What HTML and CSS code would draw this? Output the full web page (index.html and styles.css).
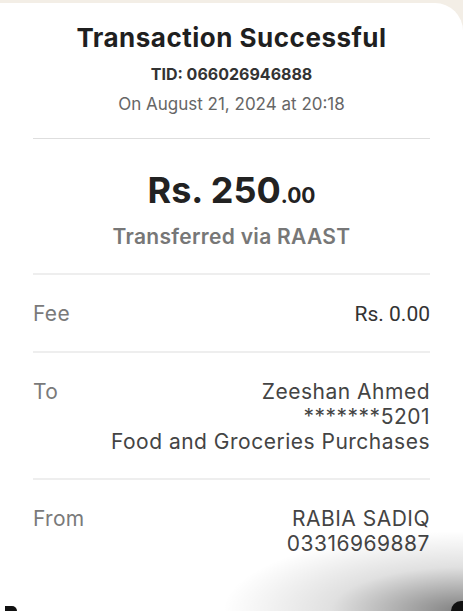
FILE: index.html
```html
<!DOCTYPE html>
<html lang="en">
<head>
<meta charset="utf-8">
<title>Transaction Successful</title>
<link rel="stylesheet" href="styles.css">
</head>
<body>
<div class="screen">
  <div class="card">
    <header class="head">
      <h1 class="title">Transaction Successful</h1>
      <p class="tid">TID: 066026946888</p>
      <p class="date">On August 21, 2024 at 20:18</p>
    </header>
    <section class="amount-block">
      <p class="amount">Rs. 250<span class="cents">.00</span></p>
      <p class="via">Transferred via RAAST</p>
    </section>
    <div class="row">
      <span class="label">Fee</span>
      <span class="value fee">Rs. 0.00</span>
    </div>
    <div class="row">
      <span class="label">To</span>
      <span class="value">Zeeshan Ahmed<br>*******5201<br>Food and Groceries Purchases</span>
    </div>
    <div class="row last">
      <span class="label">From</span>
      <span class="value">RABIA SADIQ<br>03316969887</span>
    </div>
  </div>
  <div class="shade"></div>
  <div class="corner corner-left"></div>
  <div class="corner corner-right"></div>
</div>
</body>
</html>
```
FILE: styles.css
```css
* { box-sizing: border-box; }
html, body { margin: 0; padding: 0; }
body {
  width: 463px;
  height: 611px;
  overflow: hidden;
  background: #f3eee6;
  font-family: Inter, "Open Sans", sans-serif;
}
.screen {
  position: relative;
  width: 463px;
  height: 611px;
  padding-top: 3px;
  overflow: hidden;
}
.card {
  width: 463px;
  height: 608px;
  background: #fff;
  border-top-right-radius: 28px;
  padding: 0 33px;
}
.head {
  text-align: center;
  padding-top: 20px;
  padding-bottom: 24px;
  border-bottom: 1px solid #dedede;
}
.title {
  margin: 0;
  font-size: 26px;
  line-height: 30px;
  font-weight: 700;
  letter-spacing: 0.5px;
  color: #1f1f1f;
}
.tid {
  margin: 11px 0 0;
  font-size: 16px;
  line-height: 20px;
  font-weight: 700;
  color: #333;
}
.date {
  margin: 10px 0 0;
  font-size: 17px;
  line-height: 20px;
  color: #666;
}
.amount-block {
  text-align: center;
  padding-top: 29px;
  padding-bottom: 23px;
  border-bottom: 2px solid #eeeeee;
}
.amount {
  margin: 0;
  font-size: 36px;
  line-height: 44px;
  font-weight: 700;
  color: #222;
}
.cents { font-size: 21px; }
.via {
  margin: 6px 0 0;
  font-size: 21px;
  line-height: 26px;
  font-weight: 600;
  letter-spacing: 0.3px;
  color: #777;
}
.row {
  display: flex;
  justify-content: space-between;
  align-items: baseline;
  padding: 26px 0 24px;
  border-bottom: 2px solid #eeeeee;
  font-size: 21px;
  line-height: 25px;
}
.row.last { border-bottom: none; }
.label { color: #7a7a7a; letter-spacing: 0.3px; }
.value { text-align: right; color: #444; letter-spacing: 0.5px; }
.fee { font-family: Roboto, sans-serif; color: #333; letter-spacing: 0; }
.shade {
  position: absolute;
  right: 0;
  bottom: 0;
  width: 260px;
  height: 90px;
  background: radial-gradient(ellipse 240px 80px at 100% 100%, rgba(0,0,0,0.5), rgba(0,0,0,0.12) 55%, rgba(0,0,0,0) 100%);
}
.corner {
  position: absolute;
  bottom: 0;
  background: #111;
}
.corner-left {
  left: 5px;
  width: 12px;
  height: 5px;
  border-radius: 0 6px 0 0;
}
.corner-right {
  right: 0;
  width: 12px;
  height: 10px;
  border-radius: 10px 0 0 0;
}
```
